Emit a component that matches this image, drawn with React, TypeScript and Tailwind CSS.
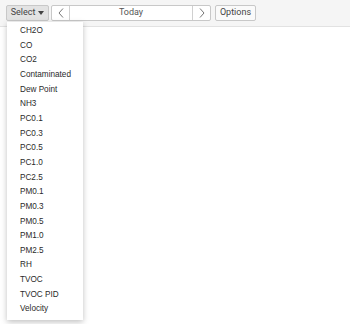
import React from 'react';

const sensors = [
  'CH2O', 'CO', 'CO2', 'Contaminated', 'Dew Point', 'NH3', 'PC0.1', 'PC0.3', 'PC0.5',
  'PC1.0', 'PC2.5', 'PM0.1', 'PM0.3', 'PM0.5', 'PM1.0', 'PM2.5', 'RH', 'TVOC', 'TVOC PID', 'Velocity',
];

const App = () => {
  return (
    <div className="relative w-[350px] h-[324px] bg-white overflow-hidden" style={{ fontFamily: 'Roboto, "Liberation Sans", sans-serif' }}>
      {/* TOOLBAR */}
      <div className="h-[27px] bg-[#f5f5f5] border-b border-[#e2e2e2] flex items-start pt-[5px] pl-[6px] gap-[2px]">
        <button className="h-[16px] w-[43px] bg-[#e3e3e3] border border-[#c8c8c8] rounded-[2px] text-[9px] text-[#444] flex items-center justify-center gap-[3px]">
          Select
          <svg width="6" height="4" viewBox="0 0 6 4"><path d="M0 0h6L3 4z" fill="#444" /></svg>
        </button>
        <div className="flex h-[16px] border border-[#c8c8c8] rounded-[2px] bg-white">
          <div className="w-[18px] flex items-center justify-center border-r border-[#d0d0d0]">
            <svg width="6" height="10" viewBox="0 0 6 10"><path d="M5 0.5L1 5l4 4.5" fill="none" stroke="#666" strokeWidth="0.9" /></svg>
          </div>
          <div className="w-[122px] flex items-center justify-center text-[9px] text-[#555]">Today</div>
          <div className="w-[18px] flex items-center justify-center border-l border-[#d0d0d0]">
            <svg width="6" height="10" viewBox="0 0 6 10"><path d="M1 0.5L5 5l-4 4.5" fill="none" stroke="#666" strokeWidth="0.9" /></svg>
          </div>
        </div>
        <button className="ml-[2px] h-[16px] w-[41px] bg-[#fafafa] border border-[#c8c8c8] rounded-[2px] text-[9px] text-[#444] flex items-center justify-center">
          Options
        </button>
      </div>

      {/* DROPDOWN */}
      <div className="absolute left-[7px] top-[22px] w-[76px] bg-white shadow-[0_2px_6px_rgba(0,0,0,0.25)] pt-[2px] pb-[3px]" style={{ fontFamily: '"Liberation Sans", Arial, sans-serif' }}>
        {sensors.map(s => (
          <div key={s} className="h-[14.65px] flex items-center pl-[13px] text-[8.2px] text-[#2a2a2a]">{s}</div>
        ))}
      </div>
    </div>
  );
};

export default App;
